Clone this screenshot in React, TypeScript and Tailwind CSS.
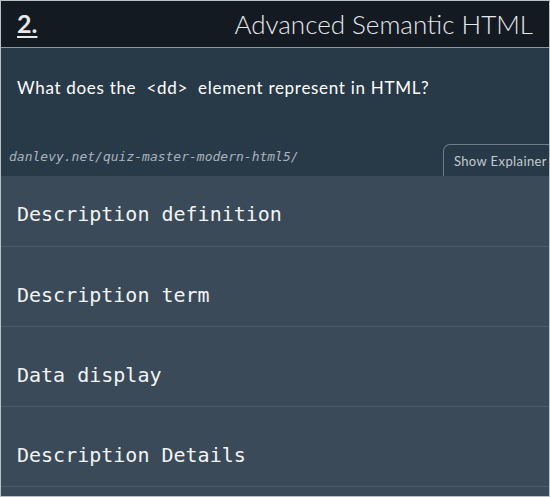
const answers = ["Description definition", "Description term", "Data display", "Description Details"];

export default function App() {
  return (
    <div className="h-[497px] w-[550px] overflow-hidden border border-[#b9c1c6] bg-[#3a4a58]">
      <header className="flex h-[47px] items-center justify-between border-b border-[#8d979e] bg-[#131a21] pl-[16px] pr-[16px] font-['Lato',sans-serif] text-[#e6e8ea]">
        <span className="text-[25px] font-bold underline decoration-2 underline-offset-[3px]">2.</span>
        <h1 className="text-[26px] font-light">Advanced Semantic HTML</h1>
      </header>

      <section className="bg-[#283a48]">
        <p className="px-[16px] pb-[45px] pt-[29px] font-['Lato',sans-serif] text-[17px] leading-[22px] tracking-[0.7px] text-white">
          What does the&nbsp; &lt;dd&gt; &nbsp;element represent in HTML?
        </p>
        <div className="flex items-end justify-between pl-[8px]">
          <span className="mb-[10px] font-['DejaVu_Sans_Mono',monospace] text-[13px] italic text-[#a9b3bc]">
            danlevy.net/quiz-master-modern-html5/
          </span>
          <button className="-mr-[9px] h-[32px] rounded-tl-[7px] border border-b-0 border-[#6e7d8a] px-[10px] pt-[2px] font-['Lato',sans-serif] text-[13px] tracking-[0.4px] text-[#c3cad1]">
            Show Explainer
          </button>
        </div>
      </section>

      <ul className="font-['DejaVu_Sans_Mono',monospace] text-[20px] leading-[24px] text-[#f2f4f5]">
        {answers.map((answer, i) => (
          <li
            key={answer}
            className={`border-b border-[#4b5b69] px-[16px] ${i === 0 ? "pb-[20px] pt-[26px]" : "pb-[19px] pt-[36px]"}`}
          >
            {answer}
          </li>
        ))}
      </ul>
    </div>
  );
}
